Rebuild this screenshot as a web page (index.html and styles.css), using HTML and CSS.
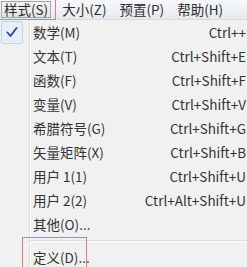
FILE: index.html
```html
<!DOCTYPE html>
<html lang="zh-CN">
<head>
  <meta charset="UTF-8" />
  <title>样式菜单</title>
  <link rel="stylesheet" href="styles.css">
</head>
<body>

  <div class="menubar">
    <span class="menu-item open">样式(S)</span>
    <span class="menu-item">大小(Z)</span>
    <span class="menu-item">预置(P)</span>
    <span class="menu-item">帮助(H)</span>
    <div class="mark mark-top"></div>
  </div>

  <div class="dropdown">
    <div class="row">
      <span class="gutter">
        <span class="check">
          <svg width="12" height="11" viewBox="0 0 12 11">
            <path d="M1.5 5.5 L4.5 9 L10.5 1" fill="none" stroke="#2c3f9c" stroke-width="1.8" stroke-linecap="round" stroke-linejoin="round"/>
          </svg>
        </span>
      </span>
      <span class="label">数学(M)</span>
      <span class="key">Ctrl++</span>
    </div>
    <div class="row">
      <span class="gutter"></span>
      <span class="label">文本(T)</span>
      <span class="key">Ctrl+Shift+E</span>
    </div>
    <div class="row">
      <span class="gutter"></span>
      <span class="label">函数(F)</span>
      <span class="key">Ctrl+Shift+F</span>
    </div>
    <div class="row">
      <span class="gutter"></span>
      <span class="label">变量(V)</span>
      <span class="key">Ctrl+Shift+V</span>
    </div>
    <div class="row">
      <span class="gutter"></span>
      <span class="label">希腊符号(G)</span>
      <span class="key">Ctrl+Shift+G</span>
    </div>
    <div class="row">
      <span class="gutter"></span>
      <span class="label">矢量矩阵(X)</span>
      <span class="key">Ctrl+Shift+B</span>
    </div>
    <div class="row">
      <span class="gutter"></span>
      <span class="label">用户 1(1)</span>
      <span class="key">Ctrl+Shift+U</span>
    </div>
    <div class="row">
      <span class="gutter"></span>
      <span class="label">用户 2(2)</span>
      <span class="key">Ctrl+Alt+Shift+U</span>
    </div>
    <div class="row">
      <span class="gutter"></span>
      <span class="label">其他(O)...</span>
      <span class="key"></span>
    </div>

    <div class="sep"></div>

    <div class="row">
      <span class="gutter"></span>
      <span class="label">定义(D)...</span>
      <span class="key"></span>
    </div>
    <div class="mark mark-bottom"></div>
  </div>

</body>
</html>
```

FILE: styles.css
```css
html, body {
  margin: 0;
  padding: 0;
}

body {
  width: 247px;
  height: 267px;
  overflow: hidden;
  background: #f1f1f1;
  font-family: "Noto Sans CJK SC", "DejaVu Sans", sans-serif;
  font-size: 13.5px;
  color: #333333;
  position: relative;
}

.menubar {
  height: 19px;
  display: flex;
  align-items: center;
  gap: 9px;
  padding-left: 1px;
  background: linear-gradient(to bottom, #f7f8fa, #e6eaf0);
  border-bottom: 1px solid #d6dbe2;
  position: relative;
}

.menu-item {
  line-height: 17px;
  padding: 0 2px;
  color: #2e2e2e;
}

.menu-item.open {
  background: linear-gradient(to bottom, #f4f4f4, #e2e4e8);
  border: 1px solid #a0a4aa;
  padding: 0 2px;
  line-height: 15px;
}

.dropdown {
  position: relative;
  background:
    linear-gradient(to right, transparent 29px, #dcdcdc 29px, #dcdcdc 30px, #ffffff 30px, #ffffff 31px, transparent 31px),
    #f1f1f1;
  height: 247px;
}

.row {
  display: grid;
  grid-template-columns: 33px 1fr auto;
  height: 24px;
  align-items: center;
  line-height: 24px;
}

.gutter {
  height: 24px;
  display: flex;
  align-items: center;
}

.check {
  width: 22px;
  height: 23px;
  margin-left: 1px;
  box-sizing: border-box;
  border: 1px solid #c3d3e6;
  border-radius: 2px;
  background: #e6eef8;
  display: flex;
  align-items: center;
  justify-content: center;
}

.key {
  margin-right: 1px;
  text-align: right;
  white-space: nowrap;
}

.sep {
  height: 9px;
  margin-left: 30px;
  background: linear-gradient(to bottom, transparent 4px, #dcdcdc 4px, #dcdcdc 5px, #ffffff 5px, #ffffff 6px, transparent 6px);
}

.mark {
  position: absolute;
  border: 1px solid #e07a82;
  pointer-events: none;
}

.mark-top {
  left: -1px;
  top: -1px;
  width: 55px;
  height: 19px;
}

.mark-bottom {
  left: 22px;
  top: 217px;
  width: 63px;
  height: 40px;
}
```
